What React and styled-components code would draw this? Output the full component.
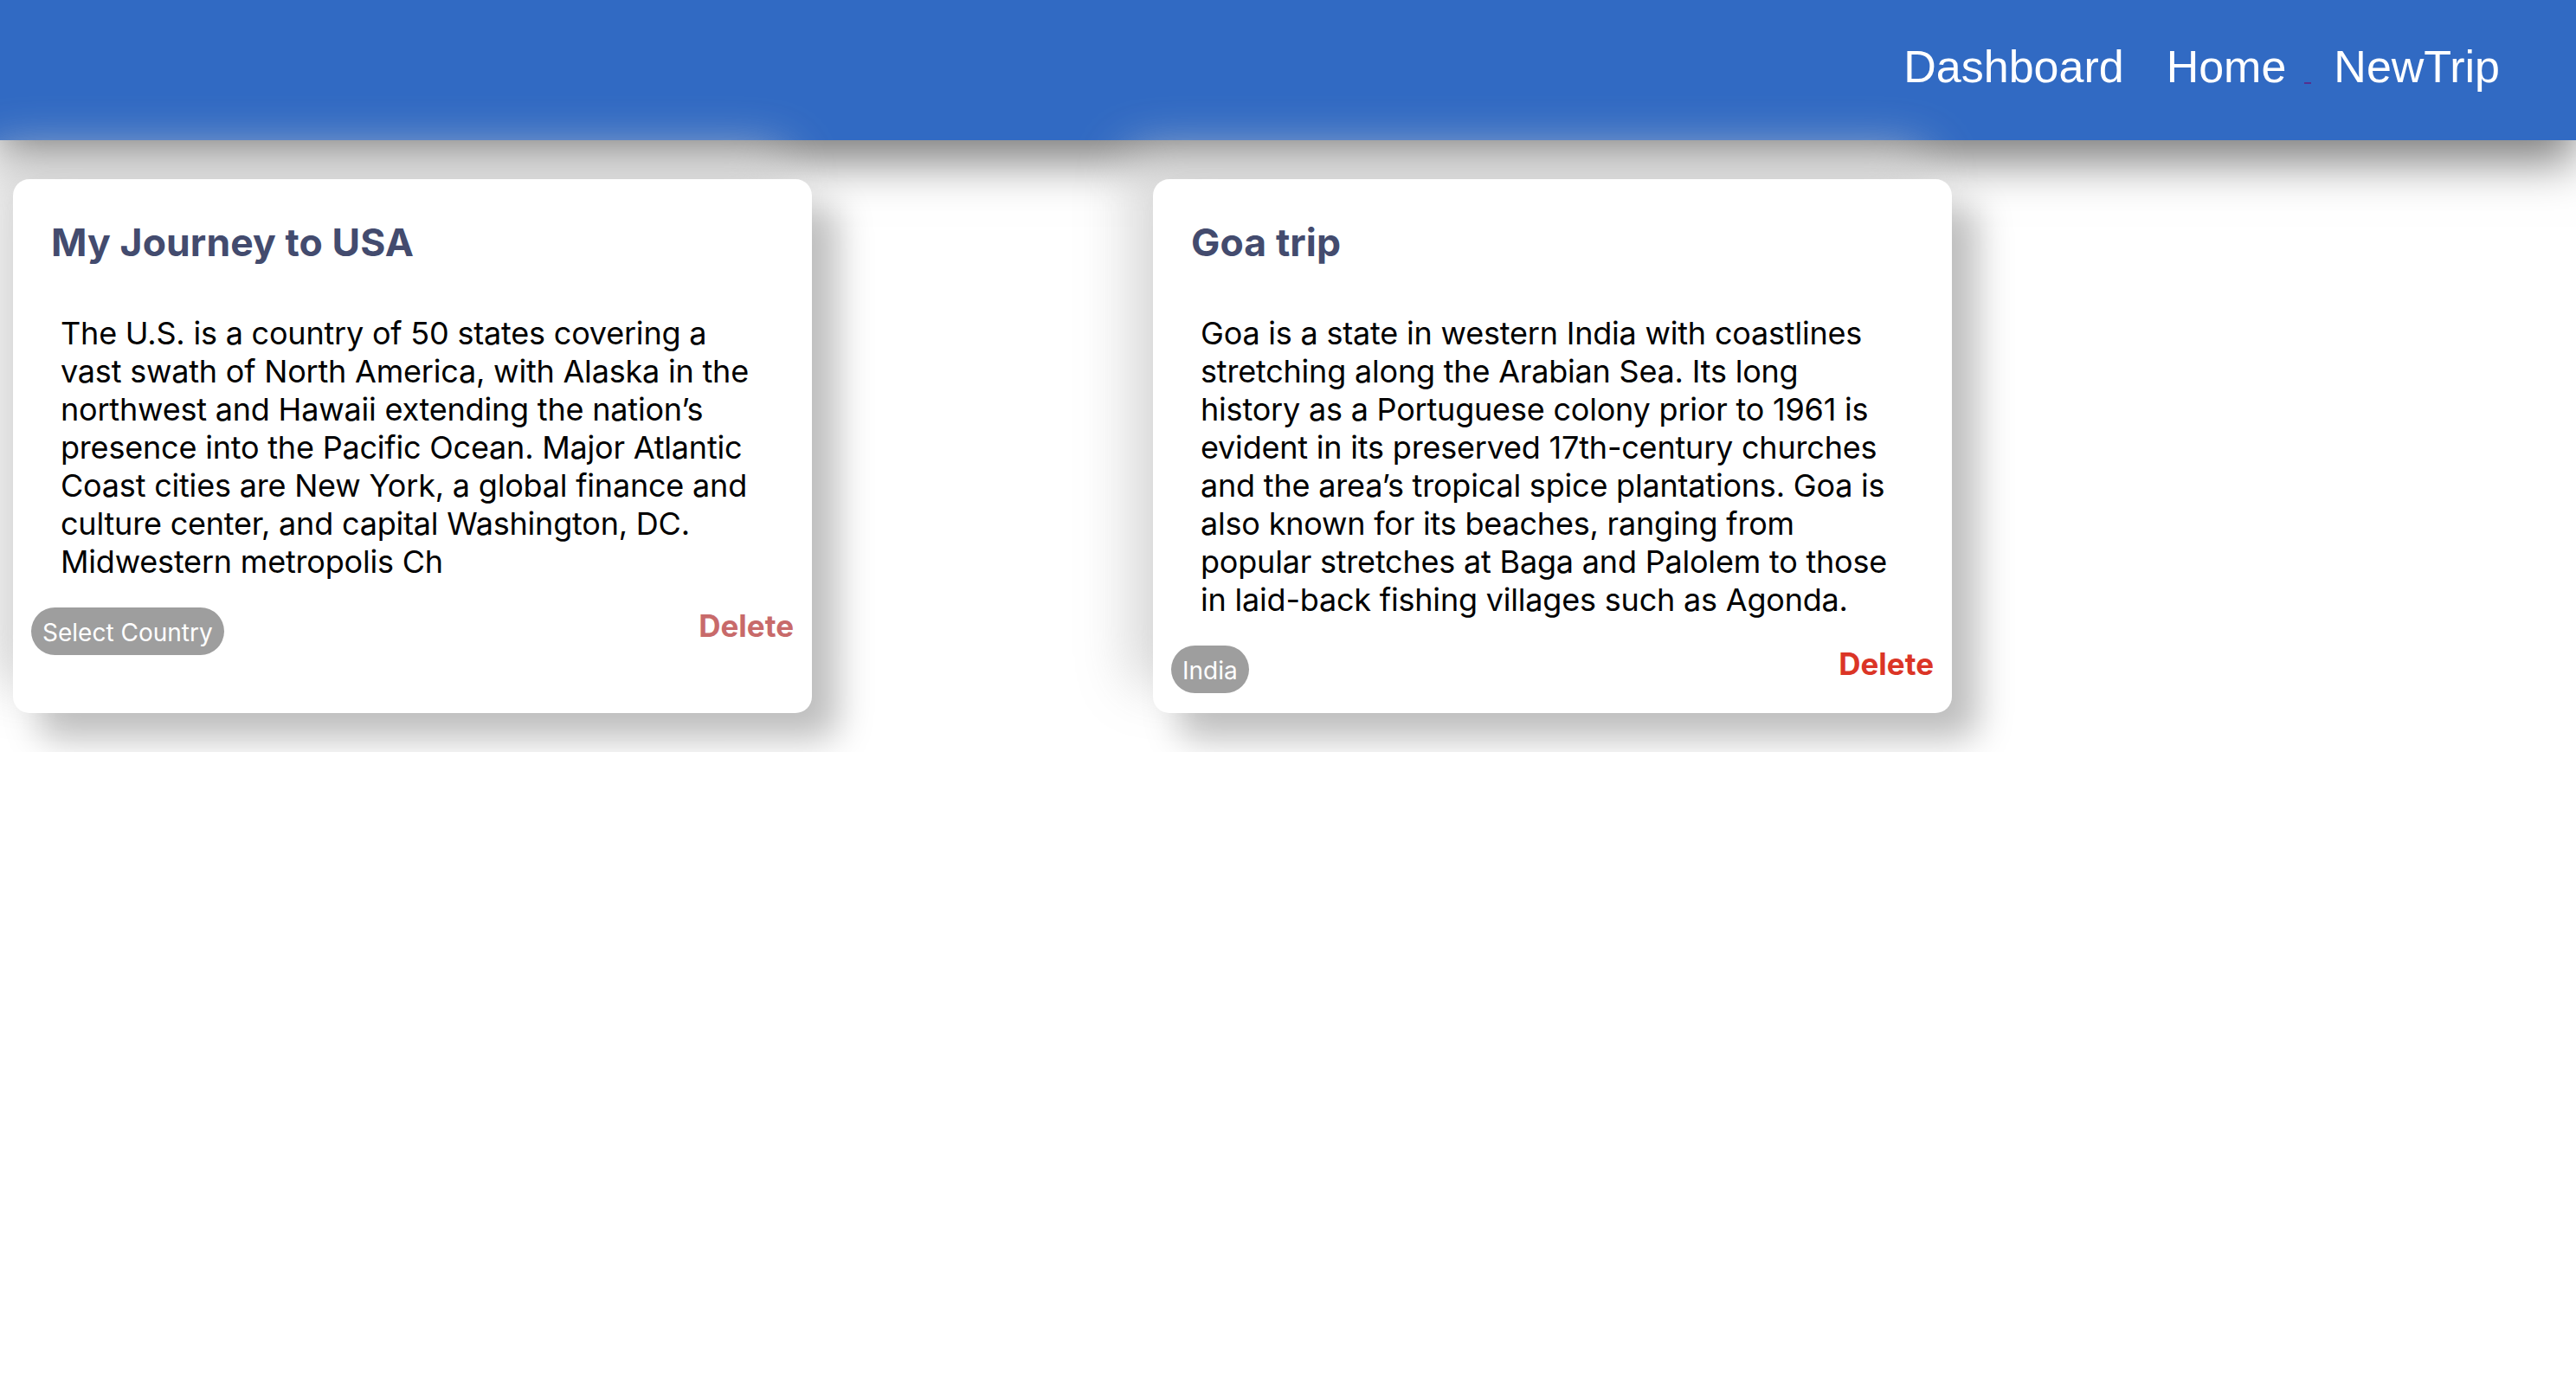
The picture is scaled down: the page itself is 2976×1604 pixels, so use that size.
import React from 'react'
import styled, {createGlobalStyle} from 'styled-components'

const GlobalStyle = createGlobalStyle`
    html, body {
        margin: 0;
        padding: 0;
        background: #ffffff;
    }
    body {
        font-family: Inter, "Noto Sans", sans-serif;
    }
`;

const Header = styled.header`
    height: 162px;
    background: #316ac3;
    box-shadow: 0 25px 50px rgba(0, 0, 0, 0.5);
    display: flex;
    justify-content: flex-end;
    align-items: center;
    padding: 0 88px 8px 0;
    box-sizing: border-box;
`;

const NavLink = styled.a`
    font-family: "Liberation Sans", Arial, sans-serif;
    font-size: 52px;
    color: #ffffff;
    text-decoration: none;
    cursor: pointer;

    & + & {
        margin-left: 49px;
    }
`;

// stray underlined space between the links
const Stub = styled.span`
    align-self: center;
    width: 8px;
    height: 2px;
    margin: 38px 26px 0 21px;
    background: #55308f;
`;

const Board = styled.main`
    display: flex;
    align-items: stretch;
    gap: 394px;
    padding: 45px 15px;
`;

const Card = styled.div`
    width: 923px;
    box-sizing: border-box;
    background: #ffffff;
    border-radius: 19px;
    padding: 26px 21px 23px;
    box-shadow: 30px 30px 40px #bebebe, -30px -30px 60px rgba(212, 212, 212, 0.85);
`;

const Title = styled.h2`
    margin: 21px 0 0 23px;
    font-size: 44.5px;
    line-height: 52px;
    font-weight: 700;
    letter-spacing: 0.1px;
    color: #434b6e;
`;

const Body = styled.p`
    margin: 57px 36px 0 34px;
    font-size: 36px;
    line-height: 44px;
    letter-spacing: -0.2px;
    color: #000000;
`;

const Footer = styled.div`
    display: flex;
    justify-content: space-between;
    align-items: flex-start;
    margin-top: 31px;
`;

const Pill = styled.span`
    display: inline-block;
    background: #9e9e9e;
    color: #ffffff;
    font-size: 28px;
    line-height: 34px;
    padding: 12px 13px 9px;
    border-radius: 28px;
`;

const Delete = styled.button`
    border: none;
    background: none;
    padding: 0;
    margin-top: 1px;
    font-family: Inter, "Noto Sans", sans-serif;
    font-size: 35px;
    line-height: 40px;
    font-weight: 700;
    color: ${props => props.$color};
    cursor: pointer;
`;

const trips = [
    {
        title: 'My Journey to USA',
        text: 'The U.S. is a country of 50 states covering a vast swath of North America, with Alaska in the northwest and Hawaii extending the nation\u2019s presence into the Pacific Ocean. Major Atlantic Coast cities are New York, a global finance and culture center, and capital Washington, DC. Midwestern metropolis Ch',
        country: 'Select Country',
        deleteColor: '#c86a6a',
    },
    {
        title: 'Goa trip',
        text: 'Goa is a state in western India with coastlines stretching along the Arabian Sea. Its long history as a Portuguese colony prior to 1961 is evident in its preserved 17th-century churches and the area\u2019s tropical spice plantations. Goa is also known for its beaches, ranging from popular stretches at Baga and Palolem to those in laid-back fishing villages such as Agonda.',
        country: 'India',
        deleteColor: '#db3526',
    },
];

const App = () => {
    return (
        <>
            <GlobalStyle />
            <Header>
                <NavLink>Dashboard</NavLink>
                <NavLink>Home</NavLink>
                <Stub />
                <NavLink>NewTrip</NavLink>
            </Header>
            <Board>
                {trips.map(trip => (
                    <Card key={trip.title}>
                        <Title>{trip.title}</Title>
                        <Body>{trip.text}</Body>
                        <Footer>
                            <Pill>{trip.country}</Pill>
                            <Delete $color={trip.deleteColor}>Delete</Delete>
                        </Footer>
                    </Card>
                ))}
            </Board>
        </>
    )
}

export default App
